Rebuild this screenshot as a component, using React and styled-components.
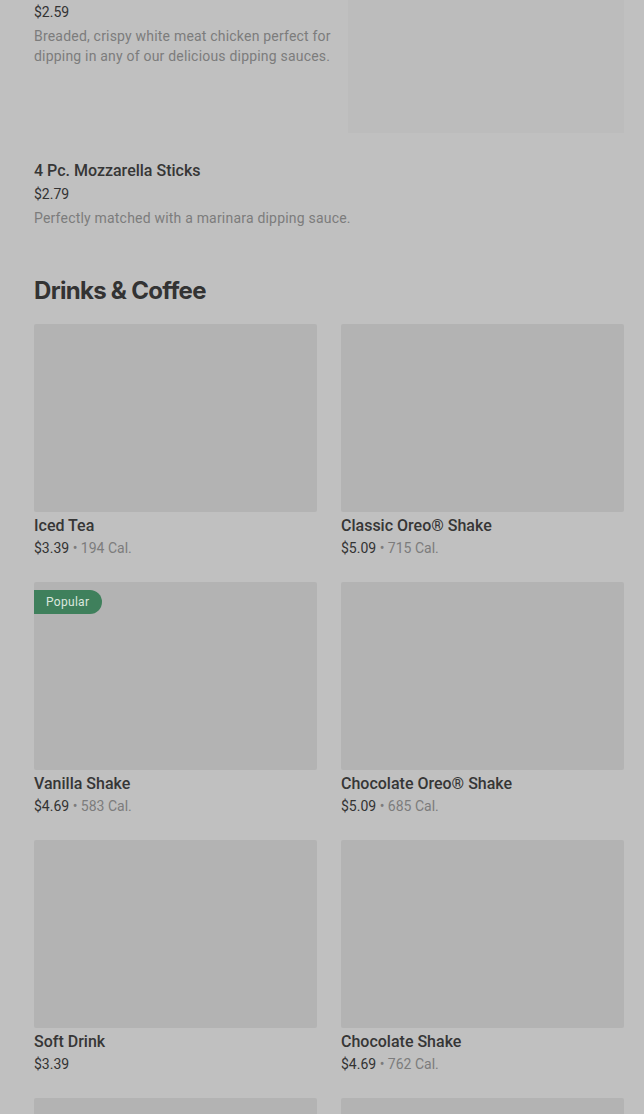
import React from 'react';
import styled, { createGlobalStyle } from 'styled-components';

const GlobalStyle = createGlobalStyle`
  html, body {
    margin: 0;
    padding: 0;
    background: #c0c0c0;
  }
  body {
    font-family: Roboto, "Liberation Sans", sans-serif;
    color: #333;
  }
`;

const Page = styled.div`
  width: 644px;
  box-sizing: border-box;
  padding: 0 20px 24px 34px;
  background: #c0c0c0;
`;

const ListItem = styled.div`
  display: flex;
  justify-content: space-between;
  gap: 14px;
  margin-bottom: ${(p) => p.$gapBelow || 0}px;
`;

const ItemText = styled.div`
  flex: 1;
  padding-top: ${(p) => p.$top || 0}px;
`;

const ItemTitle = styled.div`
  font-size: 16px;
  font-weight: 500;
  line-height: 22px;
  color: #363636;
  margin-bottom: 2px;
`;

const CardTitle = styled(ItemTitle)`
  margin-top: 1px;
  margin-bottom: 1px;
`;

const Price = styled.div`
  font-size: 14px;
  line-height: 20px;
  color: #333;
  margin-top: ${(p) => p.$top || 0}px;
`;

const Description = styled.div`
  font-size: 14px;
  line-height: 20px;
  letter-spacing: 0.2px;
  color: #7c7c7c;
  margin-top: 4px;
  max-width: ${(p) => p.$max || 'none'};
`;

const ItemImage = styled.div`
  width: 276px;
  height: 133px;
  flex-shrink: 0;
  background: #bcbcbc;
`;

const SectionTitle = styled.h2`
  margin: 0 0 17px;
  font-family: Inter, Roboto, sans-serif;
  font-size: 24px;
  font-weight: 700;
  letter-spacing: -0.7px;
  line-height: 32px;
  color: #333;
`;

const Grid = styled.div`
  display: grid;
  grid-template-columns: 1fr 1fr;
  column-gap: 24px;
  row-gap: 24px;
`;

const Card = styled.div`
  display: flex;
  flex-direction: column;
`;

const CardImage = styled.div`
  position: relative;
  height: 188px;
  background: #b3b3b3;
  border-radius: 2px;
  margin-bottom: 2px;
`;

const Badge = styled.span`
  position: absolute;
  top: 8px;
  left: 0;
  height: 24px;
  padding: 0 13px 0 12px;
  display: flex;
  align-items: center;
  background: #3f805c;
  color: #dbe7df;
  font-size: 12px;
  letter-spacing: 0.3px;
  border-radius: 0 12px 12px 0;
`;

const Meta = styled.div`
  font-size: 14px;
  line-height: 20px;
  color: #333;
`;

const Cal = styled.span`
  color: #7c7c7c;
`;

const drinks = [
  { name: 'Iced Tea', price: '$3.39', cal: '194 Cal.' },
  { name: 'Classic Oreo® Shake', price: '$5.09', cal: '715 Cal.' },
  { name: 'Vanilla Shake', price: '$4.69', cal: '583 Cal.', popular: true },
  { name: 'Chocolate Oreo® Shake', price: '$5.09', cal: '685 Cal.' },
  { name: 'Soft Drink', price: '$3.39' },
  { name: 'Chocolate Shake', price: '$4.69', cal: '762 Cal.' },
  { name: 'Sweet Tea', price: '$3.39' },
  { name: 'Strawberry Shake', price: '$4.69' },
];

export default function App() {
  return (
    <Page>
      <GlobalStyle />
      <ListItem $gapBelow={27}>
        <ItemText $top={2}>
          <Price>$2.59</Price>
          <Description $max="300px">
            Breaded, crispy white meat chicken perfect for dipping in any of our delicious dipping sauces.
          </Description>
        </ItemText>
        <ItemImage />
      </ListItem>
      <ListItem $gapBelow={47}>
        <ItemText>
          <ItemTitle>4 Pc. Mozzarella Sticks</ItemTitle>
          <Price $top={1}>$2.79</Price>
          <Description>Perfectly matched with a marinara dipping sauce.</Description>
        </ItemText>
      </ListItem>
      <SectionTitle>Drinks &amp; Coffee</SectionTitle>
      <Grid>
        {drinks.map((d) => (
          <Card key={d.name}>
            <CardImage>{d.popular && <Badge>Popular</Badge>}</CardImage>
            <CardTitle>{d.name}</CardTitle>
            <Meta>
              {d.price}
              {d.cal && <Cal> • {d.cal}</Cal>}
            </Meta>
          </Card>
        ))}
      </Grid>
    </Page>
  );
}
